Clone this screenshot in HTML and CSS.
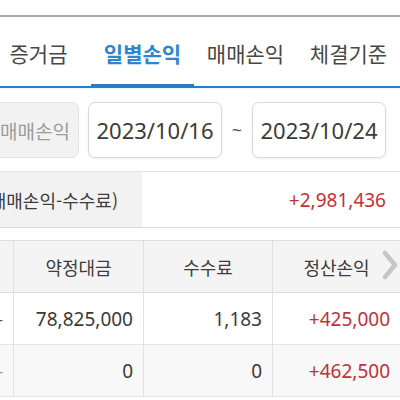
FILE: index.html
```html
<!DOCTYPE html>
<html lang="ko">
<head>
<meta charset="utf-8">
<link rel="stylesheet" href="styles.css">
</head>
<body>
<div class="topbar"></div>
<nav class="tabs">
  <div class="tab t1">증거금</div>
  <div class="tab active">일별손익</div>
  <div class="tab">매매손익</div>
  <div class="tab">체결기준</div>
</nav>
<div class="tint"></div>
<div class="controls">
  <div class="btn">매매손익</div>
  <div class="date">2023/10/16</div>
  <div class="tilde">~</div>
  <div class="date d2">2023/10/24</div>
</div>
<div class="summary">
  <div class="sum-label"><span>정산손익(매매손익-수수료)</span></div>
  <div class="sum-value">+2,981,436</div>
</div>
<div class="table">
  <div class="row head">
    <div class="c c0"></div>
    <div class="c">약정대금</div>
    <div class="c">수수료</div>
    <div class="c last">정산손익
      <svg class="chev" width="16" height="30" viewBox="0 0 16 30"><polyline points="3,3 13,15 3,27" fill="none" stroke="#c6c6c6" stroke-width="4.5" stroke-linejoin="round" stroke-linecap="round"/></svg>
    </div>
  </div>
  <div class="row">
    <div class="c c0">-</div>
    <div class="c num">78,825,000</div>
    <div class="c num">1,183</div>
    <div class="c num red">+425,000</div>
  </div>
  <div class="row alt">
    <div class="c c0 light">-</div>
    <div class="c num">0</div>
    <div class="c num">0</div>
    <div class="c num red">+462,500</div>
  </div>
</div>
</body>
</html>
```
FILE: styles.css
```css
* { box-sizing: border-box; }
html, body { margin: 0; padding: 0; background: #fff; }
body {
  width: 400px; height: 400px; overflow: hidden;
  font-family: "Noto Sans", "Noto Sans CJK KR", sans-serif;
  color: #3a3a3a;
}
.topbar {
  height: 17px;
  border-bottom: 2px solid #a9a9a9;
}
.tabs {
  display: flex;
  height: 71px;
  border-bottom: 2px solid #2b7cc6;
  font-family: "Noto Sans CJK KR", sans-serif;
  font-size: 21px;
  color: #474747;
}
.tab {
  width: 103px;
  display: flex;
  align-items: center;
  justify-content: center;
  padding-top: 2px;
}
.tab.t1 { width: 77px; margin-right: 14px; }
.tab.active {
  color: #2f86cf;
  font-weight: 700;
  border-bottom: 4px solid #2b7cc6;
  margin-bottom: -2px;
  padding-top: 4px;
  height: 71px;
}
.tint { height: 2px; background: #f1fbfd; }
.controls {
  display: flex;
  align-items: stretch;
  height: 82px;
  padding: 12px 14px 13px 0;
  border-bottom: 1px solid #e3e3e3;
}
.btn {
  width: 88px;
  margin-left: -9px;
  background: #f2f2f2;
  border: 1px solid #e4e4e4;
  border-radius: 7px;
  display: flex; align-items: center; justify-content: center;
  font-family: "Noto Sans CJK KR", sans-serif;
  font-size: 19px;
  color: #9c9c9c;
  white-space: nowrap;
}
.date {
  width: 134px;
  margin-left: 9px;
  border: 1px solid #d9d9d9;
  border-radius: 7px;
  box-shadow: 0 1px 2px rgba(0,0,0,0.08);
  display: flex; align-items: center; justify-content: center;
  font-size: 22px;
  color: #3b3b3b;
}
.date.d2 { margin-left: 0; }
.tilde {
  width: 30px;
  display: flex; align-items: center; justify-content: center;
  font-size: 18px;
  color: #555;
}
.summary {
  display: flex;
  height: 56px;
  border-bottom: 1px solid #dcdcdc;
  margin-bottom: 12px;
}
.sum-label {
  width: 142px;
  background: #f2f2f2;
  overflow: hidden;
  display: flex; align-items: center; justify-content: flex-end;
  padding-right: 24px;
  white-space: nowrap;
  font-family: "Noto Sans CJK KR", sans-serif;
  font-size: 18px;
  color: #3d3d3d;
}
.sum-label span { flex-shrink: 0; }
.sum-value {
  flex: 1;
  display: flex; align-items: center; justify-content: flex-end;
  padding-right: 14px;
  font-size: 19px;
  color: #c33039;
}
.table { border-top: 1px solid #dedede; }
.row {
  display: grid;
  grid-template-columns: 13px 130px 129px 128px;
  height: 52px;
  border-bottom: 1px solid #e4e4e4;
}
.row.head { background: #f4f4f4; border-bottom-color: #dcdcdc; }
.row.alt { background: #f8f8f8; }
.c {
  display: flex; align-items: center; justify-content: center;
  border-left: 1px solid #e2e2e2;
  font-size: 19px;
  white-space: nowrap;
  overflow: hidden;
}
.head .c { font-family: "Noto Sans CJK KR", sans-serif; font-size: 18px; color: #3d3d3d; }
.c.c0 { border-left: none; justify-content: flex-end; padding-right: 10px; color: #555; font-size: 16px; }
.c.c0.light { color: #999; }
.c.num { justify-content: flex-end; padding-right: 10px; color: #3a3a3a; }
.c.red { color: #c33039; }
.c.last { position: relative; }
.chev { position: absolute; right: 2px; top: 9px; }
```
